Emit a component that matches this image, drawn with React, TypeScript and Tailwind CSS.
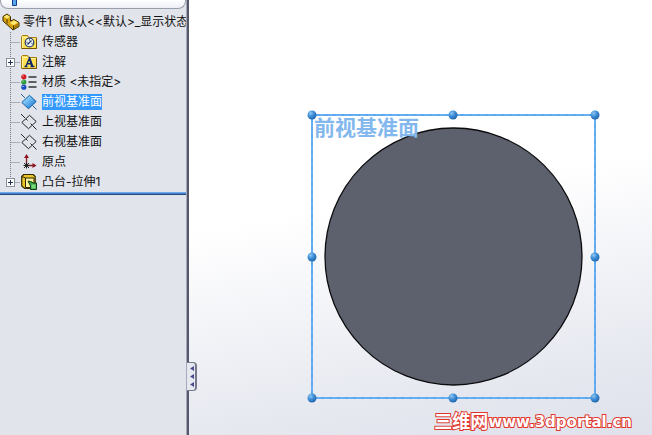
import type { ReactNode } from "react";
import clsx from "clsx";

type TreeItem = {
  label: string;
  icon: ReactNode;
  expandable?: boolean;
  selected?: boolean;
};

function PartIcon() {
  return (
    <svg width="18" height="18" viewBox="0 0 18 18" className="shrink-0" aria-hidden="true">
      <path d="M1 3.500l4-2.500 3.500 2.500v4.500l3.500-1.500 5 3v4l-6 3.500-10-9z" fill="#d9a30d" stroke="#3b2d00" strokeWidth="1" strokeLinejoin="round" />
      <path d="M1.800 3.800l3.200-2 3 2-3 2zM8 10l4-2.800 4 2.200-4.500 2.800z" fill="#ffe873" />
      <path d="M5 6v4.500M11.500 12.500v4" stroke="#4a3700" strokeWidth="1" />
      <path d="M12.200 12.800l4.200-2.600v2.800l-4.200 2.600z" fill="#a87a08" />
    </svg>
  );
}

function FolderShape() {
  return (
    <>
      <path d="M.5 14.500v-12l1-1h5l1 2h8v11z" fill="#ffe052" stroke="#a67c12" />
      <path d="M1.500 13.500v-10h5l1 1h7" fill="none" stroke="#fff5a8" />
      <path d="M1 14.500h14.500v-10" fill="none" stroke="#775500" />
    </>
  );
}

function SensorIcon() {
  return (
    <svg width="16" height="16" viewBox="0 0 16 16" aria-hidden="true">
      <FolderShape />
      <circle cx="8.500" cy="8.500" r="4.300" fill="#f8fbff" stroke="#314a70" strokeWidth="1.300" />
      <path d="M6.500 10.500l4-4M8 5.800h1M5.500 8.500h1M10.500 9.500h1" stroke="#223a62" strokeWidth="1.300" />
    </svg>
  );
}

function AnnotationIcon() {
  return (
    <svg width="16" height="16" viewBox="0 0 16 16" aria-hidden="true">
      <FolderShape />
      <path d="M4.800 12.500l3.700-8.500 3.200 8.500M6 9.800h4.500M3.500 12.500h3M9.500 12.500h4" fill="none" stroke="#0d2769" strokeWidth="1.400" />
      <path d="M8.500 4.500l2.800 8" stroke="#0d2769" strokeWidth="2" />
    </svg>
  );
}

function MaterialIcon() {
  return (
    <svg width="16" height="16" viewBox="0 0 16 16" aria-hidden="true">
      <circle cx="2.800" cy="2.800" r="2.600" fill="#d71920" />
      <circle cx="2.800" cy="8" r="2.600" fill="#2c9b3c" />
      <circle cx="2.800" cy="13.200" r="2.600" fill="#1d4fc4" />
      <path d="M1.500 2h1M1.500 7h1M1.500 12.500h1" stroke="#fff" />
      <path d="M7.500 3h8M7.500 8h8M7.500 13h8" stroke="#333" strokeWidth="1.600" />
    </svg>
  );
}

function PlaneIcon({ filled }: { filled?: boolean }) {
  return (
    <svg width="16" height="16" viewBox="0 0 16 16" aria-hidden="true">
      <defs>
        <linearGradient id="planeFill" x1="0" y1="0" x2="1" y2="1">
          <stop offset="0.2" stopColor="#9bdcff" />
          <stop offset="0.9" stopColor="#1676d2" />
        </linearGradient>
      </defs>
      <path d="M0 0l4 4M11.500 11.500l4 4" stroke={filled ? "#2462a0" : "#222"} />
      <path
        d="M.800 8.500l7.700-7.200 6.700 6.200-7.700 7.200z"
        fill={filled ? "url(#planeFill)" : "none"}
        stroke={filled ? "#165c9f" : "#222"}
      />
      {!filled && <path d="M5 5l1.500 1.500M9.500 9.500l1.500 1.500" stroke="#222" />}
    </svg>
  );
}

function OriginIcon() {
  return (
    <svg width="16" height="16" viewBox="0 0 16 16" aria-hidden="true">
      <path d="M5.500 11v-9M6 11.500h8" stroke="#8d1620" strokeWidth="1.300" />
      <path d="M5.500 0l2.500 4h-5zM15.500 11.500l-4 2.500v-5z" fill="#8d1620" />
      <path d="M3 9l5 5M8 9l-5 5M5.500 8.500v6M2.500 11.500h6" stroke="#222" />
    </svg>
  );
}

function ExtrudeIcon() {
  return (
    <svg width="16" height="16" viewBox="0 0 16 16" aria-hidden="true">
      <path d="M.7 2.500l2-2h9.500l2 2v9.500l-1.500 2.500h-9l-3-2.500z" fill="#e8c52a" stroke="#332900" strokeWidth="1.200" />
      <path d="M4.500 4h8.500v9.500h-8.500z" fill="#fff3a0" stroke="#332900" />
      <path d="M1 2.500l3.500 1.500" stroke="#332900" />
      <path d="M7 7l4 1 1 1h3.500v6.500h-6v-3.500z" fill="#38a845" stroke="#103e18" />
      <path d="M10.500 10.500h4v4h-4z" fill="#79d879" />
    </svg>
  );
}

const items: TreeItem[] = [
  { label: "传感器", icon: <SensorIcon /> },
  { label: "注解", icon: <AnnotationIcon />, expandable: true },
  { label: "材质 <未指定>", icon: <MaterialIcon /> },
  { label: "前视基准面", icon: <PlaneIcon filled />, selected: true },
  { label: "上视基准面", icon: <PlaneIcon /> },
  { label: "右视基准面", icon: <PlaneIcon /> },
  { label: "原点", icon: <OriginIcon /> },
  { label: "凸台-拉伸1", icon: <ExtrudeIcon />, expandable: true },
];

function TreeRow({ item, last }: { item: TreeItem; last: boolean }) {
  return (
    <li role="treeitem" aria-selected={!!item.selected} className="flex h-5 items-center">
      <div className="relative h-5 w-[21px] shrink-0">
        <svg width="21" height="20" aria-hidden="true">
          <path
            d={last ? "M10.500 0v10M10.500 10.500h10" : "M10.500 0v20M10.500 10.500h10"}
            stroke="#777b84"
            strokeDasharray="1 1"
          />
        </svg>
        {item.expandable && (
          <button
            type="button"
            aria-label={`展开 ${item.label}`}
            className="absolute left-1.5 top-1.5 size-[9px] border border-[#8d929e] bg-white"
          >
            <svg width="7" height="7" aria-hidden="true">
              <path d="M1 3.500h5M3.500 1v5" stroke="#26345c" />
            </svg>
          </button>
        )}
      </div>
      {item.icon}
      <span
        className={clsx(
          "ml-[5px] whitespace-nowrap leading-4",
          item.selected && "bg-[#3399ff] text-white"
        )}
      >
        {item.label}
      </span>
    </li>
  );
}

function FeatureTree() {
  return (
    <aside className="relative flex w-[189px] shrink-0 flex-col border-r-2 border-[#55586a] bg-[#e1e4eb] font-['Inter','Noto_Sans_CJK_SC',sans-serif]">
      <div className="flex flex-1 flex-col border-r border-[#a5a8b8]">
        <div className="h-[9px] rounded-b-lg border border-t-0 border-[#9a9eaa] bg-linear-to-b from-white to-[#eceff8] pl-[11px]">
          <svg width="5" height="6" aria-hidden="true">
            <path d="M.5 0v5.500h4v-5.500" fill="#58a4ec" stroke="#123f86" />
          </svg>
        </div>
        <div className="mt-[3px] flex h-5 items-center overflow-hidden pl-0.5">
          <PartIcon />
          <span className="ml-[3px] whitespace-pre leading-4">{"零件1  (默认<<默认>_显示状态"}</span>
        </div>
        <ul role="tree">
          {items.map((item, i) => (
            <TreeRow key={item.label} item={item} last={i === items.length - 1} />
          ))}
        </ul>
        <div className="h-[3px] border-b border-[#294b80] bg-linear-to-b from-[#83bdf5] to-[#2c6fbe]" />
      </div>
      <button
        type="button"
        aria-label="收起面板"
        className="absolute left-[187px] top-[362px] flex h-[29px] w-[10px] items-center rounded-r-sm border-y border-r-2 border-[#77798c] bg-[#e6e9f0] pl-[3px]"
      >
        <svg width="5" height="23" aria-hidden="true">
          <path d="M4 1v5l-4-2.500zM4 9v5l-4-2.500zM4 17v5l-4-2.500z" fill="#4b4d90" />
        </svg>
      </button>
    </aside>
  );
}

const handles = [
  [6, 6], [147, 6], [289, 6],
  [6, 148], [289, 148],
  [6, 289], [147, 289], [289, 289],
];

function PlaneSketch() {
  return (
    <svg width="295" height="295" viewBox="0 0 295 295" role="img" aria-label="前视基准面">
      <defs>
        <radialGradient id="handleFill" cx="0.35" cy="0.3" r="0.75">
          <stop offset="0" stopColor="#8cc8f5" />
          <stop offset="0.5" stopColor="#3d8bd4" />
          <stop offset="1" stopColor="#1f65ad" />
        </radialGradient>
      </defs>
      <circle cx="147.500" cy="147.500" r="128.500" fill="#5d616d" stroke="#0c0c0e" strokeWidth="1.300" />
      <rect x="6" y="6" width="283" height="283" fill="none" stroke="#5aa8f0" strokeWidth="2" />
      <rect x="6" y="6" width="283" height="283" fill="none" stroke="#74b6f3" strokeWidth="1" strokeDasharray="5 3" />
      <text x="8" y="26" fontSize="21" fontWeight="700" fill="#83b8ee">
        前视基准面
      </text>
      {handles.map(([x, y]) => (
        <circle key={`${x}-${y}`} cx={x} cy={y} r="4.500" fill="url(#handleFill)" />
      ))}
    </svg>
  );
}

export default function App() {
  return (
    <div className="flex min-h-screen bg-white font-['DejaVu_Sans','Noto_Sans_CJK_SC',sans-serif] text-xs text-[#111]">
      <FeatureTree />
      <main className="flex min-w-0 flex-1 flex-col items-end bg-linear-[170deg] from-white from-45% via-[#e6e8f0] via-85% to-[#dfe2eb] pt-[109px]">
        <div className="pr-[51px]">
          <PlaneSketch />
        </div>
        <a
          href="http://www.3dportal.cn"
          className="mt-1.5 flex items-center whitespace-nowrap pr-5 leading-6 text-white [-webkit-text-stroke:2px_#e0362c] [paint-order:stroke_fill]"
        >
          <span className="text-lg leading-6 font-bold">三维网</span>
          <span className="text-[15px] font-bold">www.3dportal.cn</span>
        </a>
      </main>
    </div>
  );
}
